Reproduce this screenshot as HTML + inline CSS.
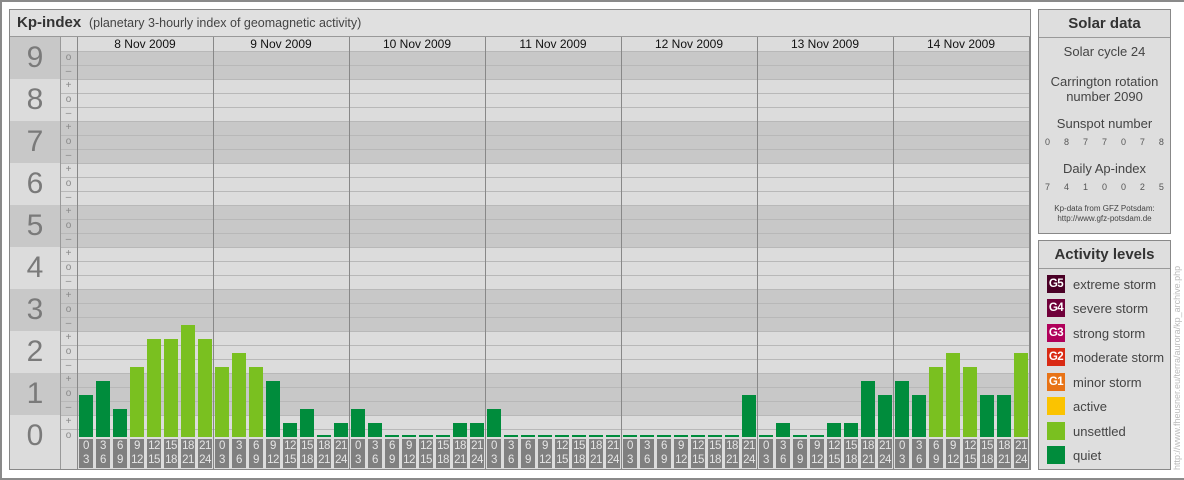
<!DOCTYPE html>
<html><head><meta charset="utf-8"><style>
*{margin:0;padding:0;box-sizing:border-box}
body{width:1184px;height:480px;background:#fff;position:relative;overflow:hidden;font-family:"Liberation Sans",sans-serif}
.a{position:absolute}
#outer{left:0;top:0;width:1184px;height:480px;border:2px solid #8a8a8a;border-right:none}
#main{left:9px;top:9px;width:1022px;height:461px;border:1px solid #888;background:#dcdcdc}
.num{position:absolute;left:10px;width:50px;font-size:30px;color:#7a7a7a;text-align:center}
.sg{position:absolute;left:60px;width:17px;font-size:10px;color:#888;text-align:center;line-height:14px}
.date{position:absolute;top:37px;height:14px;width:136px;text-align:center;font-size:12px;line-height:14px;color:#111}
.lb{position:absolute;top:439px;width:14px;height:29px;background:#808080;color:#e6e6e6;font-size:11.5px;line-height:14px;text-align:center;letter-spacing:-0.5px}
.bx{position:absolute;left:1038px;width:133px;border:1px solid #888;background:#dedede}
.hd{height:28px;border-bottom:1px solid #999;font-weight:bold;font-size:15px;text-align:center;line-height:28px;color:#333}
.t{position:absolute;left:0;width:131px;font-size:13px;color:#444;text-align:center;line-height:15px}
.row{position:absolute;left:0;width:131px;display:flex;justify-content:space-between;font-size:9px;color:#555;padding:0 6px}
.lv{position:absolute;left:8px;height:18px;display:flex;align-items:center;font-size:13px;color:#444}
.lv i{display:inline-block;width:18px;height:18px;margin-right:8px;color:#fff;font-style:normal;font-weight:bold;font-size:11.5px;line-height:18px;text-align:center;letter-spacing:-0.5px}
</style></head><body>
<div class="a" id="outer"></div>
<div class="a" id="main"></div>
<div id="g"></div>
<div class="a" style="left:10px;top:10px;width:1020px;height:27px;background:#e0e0e0;border-bottom:1px solid #999"></div>
<div class="a" style="left:17px;top:14px;font-size:14px;color:#333"><b style="font-size:15px">Kp-index</b>&nbsp;&nbsp;<span style="font-size:12.5px;color:#444">(planetary 3-hourly index of geomagnetic activity)</span></div>
<div class="date" style="left:77px">8 Nov 2009</div>
<div class="date" style="left:213px">9 Nov 2009</div>
<div class="date" style="left:349px">10 Nov 2009</div>
<div class="date" style="left:485px">11 Nov 2009</div>
<div class="date" style="left:621px">12 Nov 2009</div>
<div class="date" style="left:757px">13 Nov 2009</div>
<div class="date" style="left:893px">14 Nov 2009</div>
<div id="lbs"></div>

<div class="bx" style="top:9px;height:225px">
<div class="hd">Solar data</div>
<div class="t" style="top:34px">Solar cycle 24</div>
<div class="t" style="top:64px">Carrington rotation<br>number 2090</div>
<div class="t" style="top:106px">Sunspot number</div>
<div class="row" style="top:127px"><span>0</span><span>8</span><span>7</span><span>7</span><span>0</span><span>7</span><span>8</span></div>
<div class="t" style="top:151px">Daily Ap-index</div>
<div class="row" style="top:172px"><span>7</span><span>4</span><span>1</span><span>0</span><span>0</span><span>2</span><span>5</span></div>
<div style="position:absolute;left:0;width:131px;top:194px;font-size:8px;color:#444;text-align:center;line-height:10px">Kp-data from GFZ Potsdam:<br>http://www.gfz-potsdam.de</div>
</div>
<div class="bx" style="top:240px;height:230px">
<div class="hd">Activity levels</div>
<div class="lv" style="top:34px"><i style="background:#4a0026">G5</i>extreme storm</div>
<div class="lv" style="top:58px"><i style="background:#70003a">G4</i>severe storm</div>
<div class="lv" style="top:83px"><i style="background:#b0005a">G3</i>strong storm</div>
<div class="lv" style="top:107px"><i style="background:#d92a14">G2</i>moderate storm</div>
<div class="lv" style="top:132px"><i style="background:#e87316">G1</i>minor storm</div>
<div class="lv" style="top:156px"><i style="background:#fbc300"></i>active</div>
<div class="lv" style="top:181px"><i style="background:#7ac020"></i>unsettled</div>
<div class="lv" style="top:205px"><i style="background:#008c3c"></i>quiet</div>
</div>
<div class="a" style="left:1172px;top:470px;transform-origin:0 0;transform:rotate(-90deg);font-size:9px;color:#bbb;white-space:nowrap;width:230px">http://www.fheusner.eu/terra/aurora/kp_archive.php</div>
<script>
(function(){
var g=document.getElementById('g'),h='';
for(var k=9;k>=0;k--){var yy=37+(9-k)*42;var dark=(k%2==1);
 var c=dark?'#c8c8c8':'#dcdcdc';
 var ct=yy,ch=42; if(k==9){ct=51;ch=28;} if(k==0){ch=22;}
 h+='<div class="a" style="left:77px;top:'+ct+'px;width:952px;height:'+ch+'px;background:'+c+'"></div>';
 h+='<div class="a" style="left:10px;top:'+yy+'px;width:67px;height:'+(k==0?22:42)+'px;background:'+c+'"></div>';
 h+='<div class="num" style="top:'+(yy+(k==0?0:4))+'px;line-height:'+(k==0?42:34)+'px">'+k+'</div>';
}
for(var y=51;y<437;y+=14){var i=(y-51)/14;var s=['o','\u2013','+'][i%3];
 h+='<div class="sg" style="top:'+y+'px">'+s+'</div>';
 h+='<div class="a" style="left:60px;top:'+y+'px;width:969px;height:1px;background:#b8b8b8"></div>';}
h+='<div class="a" style="left:60px;top:37px;width:17px;height:14px;background:#dcdcdc"></div>';
h+='<div class="a" style="left:60px;top:37px;width:1px;height:432px;background:#999"></div>';
for(var d=0;d<8;d++)h+='<div class="a" style="left:'+(77+136*d)+'px;top:37px;width:1px;height:432px;background:#888"></div>';
var v=[[3,4,2,5,7,7,8,7],[5,6,5,4,1,2,0,1],[2,1,0,0,0,0,1,1],[2,0,0,0,0,0,0,0],[0,0,0,0,0,0,0,3],[0,1,0,0,1,1,4,3],[4,3,5,6,5,3,3,6]];
for(var d=0;d<7;d++)for(var b=0;b<8;b++){var t=v[d][b];var hh=t==0?2:t*14;var col=t>=5?'#7ac020':'#008c3c';
 h+='<div class="a" style="left:'+(79+136*d+17*b)+'px;top:'+(437-hh)+'px;width:14px;height:'+hh+'px;background:'+col+'"></div>';}
g.innerHTML=h;
var L='',T=[0,3,6,9,12,15,18,21,24];
for(var d=0;d<7;d++)for(var b=0;b<8;b++)L+='<div class="lb" style="left:'+(79+136*d+17*b)+'px">'+T[b]+'<br>'+T[b+1]+'</div>';
document.getElementById('lbs').innerHTML=L;
})();
</script>
</body></html>
